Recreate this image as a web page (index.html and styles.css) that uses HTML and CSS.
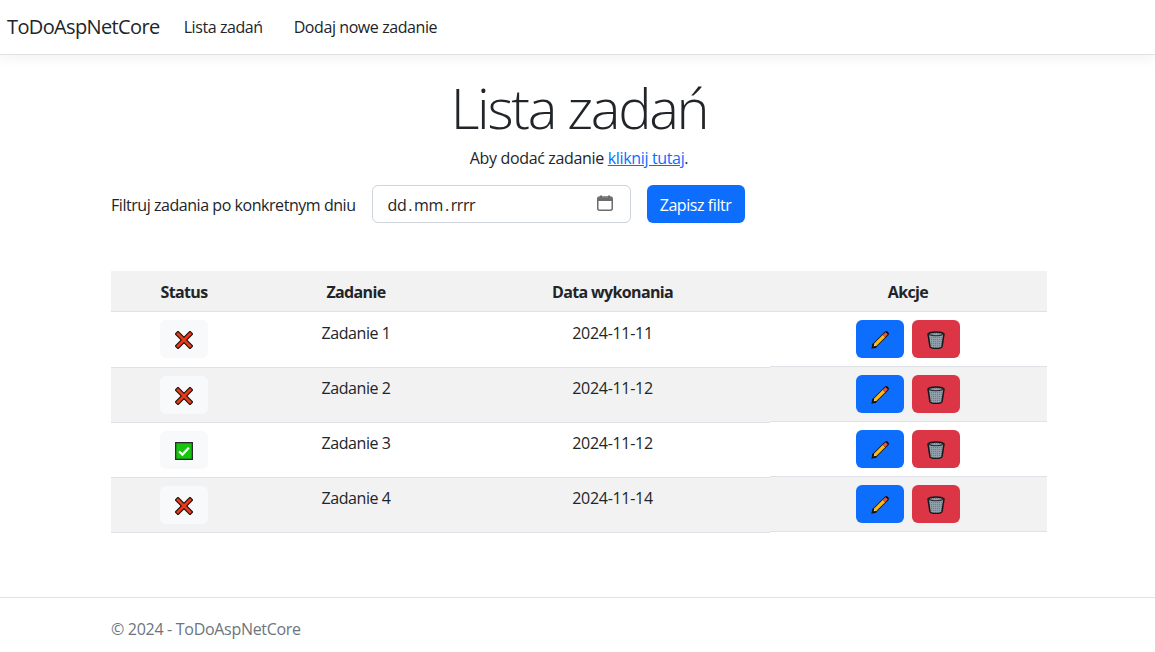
FILE: index.html
```html
<!DOCTYPE html>
<html lang="pl">
<head>
  <meta charset="UTF-8" />
  <meta name="viewport" content="width=device-width, initial-scale=1" />
  <title>Lista zadań - ToDoAspNetCore</title>
  <link rel="stylesheet" href="styles.css">
</head>
<body>

  <svg class="defs" width="0" height="0">
    <defs>
      <symbol id="i-x" viewBox="0 0 18 18">
        <path d="M3 3 15 15M15 3 3 15" stroke="#1a1008" stroke-width="5" stroke-linecap="square" fill="none" />
        <path d="M3 3 15 15M15 3 3 15" stroke="#e8391d" stroke-width="2.8" stroke-linecap="square" fill="none" />
      </symbol>
      <symbol id="i-check" viewBox="0 0 18 18">
        <rect x=".6" y=".6" width="16.8" height="16.8" fill="#16c60c" stroke="#2b2b2b" stroke-width="1.4" />
        <path d="M4.2 9.5 7.4 12.6 13.8 5.8" stroke="#fff" stroke-width="2.2" fill="none" />
      </symbol>
      <symbol id="i-pencil" viewBox="0 0 18 18">
        <path d="M3.5 14.5 15.3 2.7" stroke="#15120c" stroke-width="5" stroke-linecap="round" />
        <path d="M.3 17.7 1.6 12.4 5.6 16.4Z" fill="#15120c" />
        <path d="M4 14 13 5" stroke="#fdb913" stroke-width="3.2" />
        <path d="M13 5 15.6 2.4" stroke="#e2574c" stroke-width="3.2" />
        <path d="M2.6 15.4 3.6 12.8 5.2 14.4Z" fill="#e8dcc0" />
      </symbol>
      <symbol id="i-trash" viewBox="0 0 18 18">
        <pattern id="mesh" width="2" height="2" patternUnits="userSpaceOnUse">
          <rect width="2" height="2" fill="#8f9ea8" />
          <rect width="1" height="1" fill="#6f7d86" />
        </pattern>
        <path d="M1 3C3.5 .2 14.5 .2 17 3L15 15.7C14 18 4 18 3 15.7Z" fill="url(#mesh)" stroke="#14171a" stroke-width="1.5" />
        <path d="M1.6 3.3C5 5.2 13 5.2 16.4 3.3" fill="none" stroke="#2d3338" stroke-width="1.2" />
      </symbol>
    </defs>
  </svg>

  <nav class="navbar">
    <a class="brand" href="#">ToDoAspNetCore</a>
    <a class="nav-link" href="#">Lista zadań</a>
    <a class="nav-link" href="#">Dodaj nowe zadanie</a>
  </nav>

  <main class="container">
    <div class="intro">
      <h1>Lista zadań</h1>
      <p>Aby dodać zadanie <a href="#">kliknij tutaj</a>.</p>
    </div>

    <form class="filter">
      <label>Filtruj zadania po konkretnym dniu</label>
      <div class="date-input">
        <span class="date-text">dd<i>.</i>mm<i>.</i>rrrr</span>
        <svg class="cal" viewBox="0 0 16 16" width="16" height="16">
          <path d="M4 .5V3M12 .5V3" stroke="#6c6c6c" stroke-width="2" />
          <rect x=".75" y="2" width="14.5" height="13.2" rx="2" fill="none" stroke="#6c6c6c" stroke-width="1.5" />
          <rect x="1" y="2.5" width="14" height="3.5" fill="#6c6c6c" />
        </svg>
      </div>
      <button class="btn btn-primary" type="button">Zapisz filtr</button>
    </form>

    <div class="tasks">
      <div class="row head">
        <div class="cell">Status</div>
        <div class="cell">Zadanie</div>
        <div class="cell">Data wykonania</div>
        <div class="cell last">Akcje</div>
      </div>

      <div class="row">
        <div class="cell"><button class="btn btn-light" type="button"><svg class="ico"><use href="#i-x" /></svg></button></div>
        <div class="cell">Zadanie 1</div>
        <div class="cell date">2024-11-11</div>
        <div class="cell last"><button class="btn btn-primary" type="button"><svg class="ico"><use href="#i-pencil" /></svg></button><button class="btn btn-danger" type="button"><svg class="ico"><use href="#i-trash" /></svg></button></div>
      </div>
      <div class="row">
        <div class="cell"><button class="btn btn-light" type="button"><svg class="ico"><use href="#i-x" /></svg></button></div>
        <div class="cell">Zadanie 2</div>
        <div class="cell date">2024-11-12</div>
        <div class="cell last"><button class="btn btn-primary" type="button"><svg class="ico"><use href="#i-pencil" /></svg></button><button class="btn btn-danger" type="button"><svg class="ico"><use href="#i-trash" /></svg></button></div>
      </div>
      <div class="row">
        <div class="cell"><button class="btn btn-light" type="button"><svg class="ico"><use href="#i-check" /></svg></button></div>
        <div class="cell">Zadanie 3</div>
        <div class="cell date">2024-11-12</div>
        <div class="cell last"><button class="btn btn-primary" type="button"><svg class="ico"><use href="#i-pencil" /></svg></button><button class="btn btn-danger" type="button"><svg class="ico"><use href="#i-trash" /></svg></button></div>
      </div>
      <div class="row">
        <div class="cell"><button class="btn btn-light" type="button"><svg class="ico"><use href="#i-x" /></svg></button></div>
        <div class="cell">Zadanie 4</div>
        <div class="cell date">2024-11-14</div>
        <div class="cell last"><button class="btn btn-primary" type="button"><svg class="ico"><use href="#i-pencil" /></svg></button><button class="btn btn-danger" type="button"><svg class="ico"><use href="#i-trash" /></svg></button></div>
      </div>
    </div>
  </main>

  <footer class="footer">© 2024 - ToDoAspNetCore</footer>

</body>
</html>
```

FILE: styles.css
```css
* { box-sizing: border-box; }
html, body { margin: 0; height: 100%; }
body {
  font-family: "Open Sans", sans-serif;
  font-size: 16px;
  line-height: 24px;
  letter-spacing: -0.42px;
  color: #212529;
  background: #fff;
  overflow: hidden;
}
.defs { position: absolute; }
a { color: inherit; text-decoration: none; }

.navbar {
  height: 55px;
  display: flex;
  align-items: center;
  padding-left: 7px;
  border-bottom: 1px solid #e2e2e2;
  box-shadow: 0 4px 12px rgba(0,0,0,.05);
}
.brand { font-size: 20px; letter-spacing: -0.63px; margin-right: 24px; }
.nav-link { margin-right: 31px; }

.container {
  width: 936px;
  margin-left: 111px;
}
.intro { text-align: center; padding-top: 19px; }
h1 {
  margin: 0 0 5px;
  font-size: 56px;
  font-weight: 300;
  line-height: 67px;
  letter-spacing: -2.3px;
}
.intro p { margin: 0 0 15px; letter-spacing: -0.34px; }
.intro p a { color: #0d6efd; text-decoration: underline; }

.filter {
  display: flex;
  align-items: center;
  gap: 16px;
  margin-bottom: 48px;
}
.filter label { padding-top: 2px; letter-spacing: -0.45px; }
.date-input {
  width: 259px;
  height: 38px;
  display: flex;
  align-items: center;
  justify-content: space-between;
  padding: 0 17px 0 15px;
  border: 1px solid #ced4da;
  border-radius: 6px;
}
.date-text { padding-top: 2px; }
.date-text i { font-style: normal; margin: 0 2px; }
.cal { margin-bottom: 2px; }

.btn {
  height: 38px;
  padding: 0 12px;
  border: 1px solid transparent;
  border-radius: 6px;
  font: inherit;
  letter-spacing: inherit;
  white-space: nowrap;
  display: inline-flex;
  align-items: center;
  justify-content: center;
}
.btn-primary { background: #0d6efd; color: #fff; }
.btn-danger { background: #dc3545; color: #fff; }
.btn-light { background: #f8f9fa; }
.filter .btn { width: 98px; padding: 2px 0 0; }
.cell .btn { width: 48px; padding: 2px 0 0; vertical-align: top; }
.cell .btn + .btn { margin-left: 8px; }
.ico { width: 18px; height: 18px; display: block; }

.row {
  display: grid;
  grid-template-columns: 146px 198px 315px 277px;
  align-items: start;
  height: 55px;
}
.row:nth-child(2) { height: 56px; }
.cell {
  height: 55px;
  padding: 8px;
  line-height: 26px;
  text-align: center;
  border-bottom: 1px solid #dee2e6;
}
.cell.date { letter-spacing: -0.3px; }
.cell.last { padding-right: 9px; }
.row:nth-child(2) .cell { height: 56px; }
.row:nth-child(2) .cell.last { height: 55px; }
.row:nth-child(n+3) .cell { line-height: 24px; }
.row:nth-child(n+3) .cell.last { margin-top: -1px; }
.row:nth-child(odd) .cell { background: #f2f2f2; }
.head { height: 41px; }
.head .cell { height: 41px; font-weight: 700; letter-spacing: -0.65px; background: #f2f2f2; }

.footer {
  margin-top: 64px;
  padding: 19px 0 0 111px;
  border-top: 1px solid #dee2e6;
  letter-spacing: -0.3px;
  color: #6c757d;
}
```
